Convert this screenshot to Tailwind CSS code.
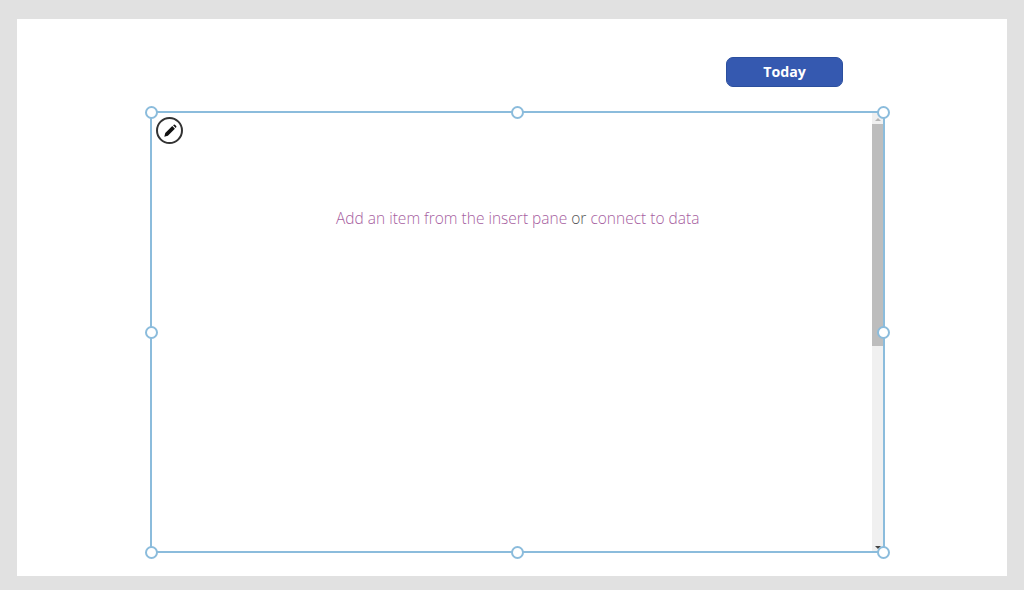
<!DOCTYPE html>
<html lang="en">
<head>
    <meta charset="UTF-8">
    <title>Gallery</title>
    <script src="https://cdn.jsdelivr.net/npm/@tailwindcss/browser@4"></script>
</head>
<body class="h-[590px] w-[1024px] overflow-hidden bg-[#e1e1e1] font-['Open_Sans',sans-serif]">
    <div class="pt-[19px] pl-[17px]">
        <div class="h-[557px] w-[990px] bg-white pt-[38px] pl-[133px]">
            <!-- Today button -->
            <div class="flex justify-end pr-[164px]">
                <button class="flex h-[30px] w-[117px] items-center justify-center rounded-[7px] border border-[#2b4f9e] bg-[#3559b0] text-[14.2px] font-bold text-white">Today</button>
            </div>

            <!-- Empty gallery -->
            <div class="relative mt-[24px] h-[442px] w-[735px] border-2 border-[#8bbcdc]">
                <div class="flex h-full justify-end">
                    <div class="relative h-full w-[11px] bg-[#f0f0f0]">
                        <div class="absolute left-[3px] top-[5px] h-0 w-0 border-x-[3px] border-b-[3px] border-x-transparent border-b-[#b5b5b5]"></div>
                        <div class="pt-[11px]"><div class="h-[222px] bg-[#bdbdbd]"></div></div>
                        <div class="absolute bottom-[2px] left-[3px] h-0 w-0 border-x-[3px] border-t-[3px] border-x-transparent border-t-[#444444]"></div>
                    </div>
                </div>

                <button class="absolute left-[4px] top-[4px] flex h-[27px] w-[27px] items-center justify-center rounded-full border-2 border-[#333333] bg-white">
                    <svg class="h-[14px] w-[14px]" viewBox="0 0 16 16" fill="#111111">
                        <path d="M1.5 14.5 L2.6 10.4 L10.6 2.4 L13.6 5.4 L5.6 13.4 Z"/>
                        <path d="M11.5 1.5 L12.4 0.8 Q13 0.4 13.6 0.9 L15.1 2.4 Q15.6 3 15.1 3.6 L14.5 4.5 Z"/>
                    </svg>
                </button>

                <p class="absolute left-[184px] top-[94px] whitespace-nowrap text-[15.5px] font-light text-[#a65ea0]">Add an item from the insert pane <span class="text-[#555555]">or</span> connect to data</p>

                <!-- Selection handles -->
                <span class="absolute left-[-7px] top-[-7px] h-[13px] w-[13px] rounded-full border-2 border-[#8bbcdc] bg-white"></span>
                <span class="absolute left-[359px] top-[-7px] h-[13px] w-[13px] rounded-full border-2 border-[#8bbcdc] bg-white"></span>
                <span class="absolute right-[-7px] top-[-7px] h-[13px] w-[13px] rounded-full border-2 border-[#8bbcdc] bg-white"></span>
                <span class="absolute left-[-7px] top-[213px] h-[13px] w-[13px] rounded-full border-2 border-[#8bbcdc] bg-white"></span>
                <span class="absolute right-[-7px] top-[213px] h-[13px] w-[13px] rounded-full border-2 border-[#8bbcdc] bg-white"></span>
                <span class="absolute bottom-[-8px] left-[-7px] h-[13px] w-[13px] rounded-full border-2 border-[#8bbcdc] bg-white"></span>
                <span class="absolute bottom-[-8px] left-[359px] h-[13px] w-[13px] rounded-full border-2 border-[#8bbcdc] bg-white"></span>
                <span class="absolute bottom-[-8px] right-[-7px] h-[13px] w-[13px] rounded-full border-2 border-[#8bbcdc] bg-white"></span>
            </div>
        </div>
    </div>
</body>
</html>
